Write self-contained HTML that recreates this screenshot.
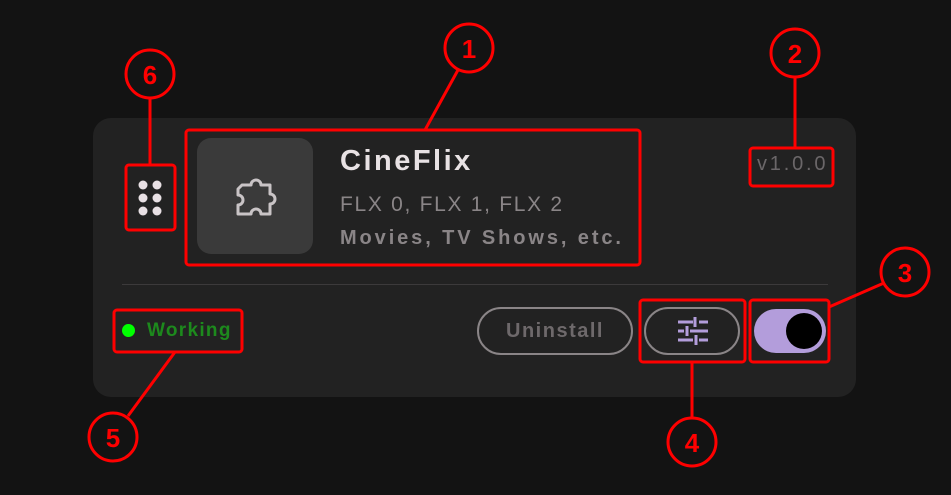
<!DOCTYPE html>
<html><head><style>
body{margin:0;width:951px;height:495px;background:#131313;position:relative;overflow:hidden;font-family:"Liberation Sans",sans-serif}
.a{position:absolute;white-space:nowrap}
.card{left:93px;top:118px;width:763px;height:279px;background:#222;border-radius:18px}
.t{color:#e8e2e4;font-weight:bold;font-size:29px;left:340px;top:145px;letter-spacing:2.5px}
.s{color:#8a8587;font-size:21px;left:340px;top:193px;letter-spacing:1.7px}
.b{color:#8a8587;font-weight:bold;font-size:20px;left:340px;top:227px;letter-spacing:2.9px}
.v{color:#6b6769;font-size:20px;left:757px;top:153px;letter-spacing:2.8px}
.btn{border:2px solid #8a8587;border-radius:26px;box-sizing:border-box}
</style></head><body>
<div class="a card"></div>
<div class="a" style="left:197px;top:138px;width:116px;height:116px;background:#3a3a3a;border-radius:14px"></div>
<svg class="a" style="left:230px;top:174px" width="52" height="46" viewBox="0 0 52 46"><path d="M12 11h9a5 5 0 0 1 10 0h9v9a5 5 0 0 1 0 10v10h-9a5 5 0 0 0-10 0H8v-9a5 5 0 0 0 0-10V15z" fill="none" stroke="#c9c4c6" stroke-width="3" stroke-linejoin="round"/></svg>
<div class="a t">CineFlix</div>
<div class="a s">FLX 0, FLX 1, FLX 2</div>
<div class="a b">Movies, TV Shows, etc.</div>
<div class="a v">v1.0.0</div>
<div class="a" style="left:122px;top:284px;width:706px;height:1px;background:#3c3a3b"></div>
<svg class="a" style="left:130px;top:170px" width="40" height="56"><g fill="#e8e0e4"><circle cx="13" cy="15" r="4.5"/><circle cx="27" cy="15" r="4.5"/><circle cx="13" cy="28" r="4.5"/><circle cx="27" cy="28" r="4.5"/><circle cx="13" cy="41" r="4.5"/><circle cx="27" cy="41" r="4.5"/></g></svg>
<div class="a" style="left:122px;top:324px;width:13px;height:13px;border-radius:50%;background:#0f0"></div>
<div class="a" style="left:147px;top:320px;color:#1d8a1d;font-weight:bold;font-size:19px;letter-spacing:1.3px">Working</div>
<div class="a btn" style="left:477px;top:307px;width:156px;height:48px;color:#6e696b;font-weight:bold;font-size:20px;text-align:center;line-height:44px;letter-spacing:1.5px">Uninstall</div>
<div class="a btn" style="left:644px;top:307px;width:96px;height:48px"></div>
<svg class="a" style="left:676px;top:316px" width="34" height="30" fill="none" stroke="#b39ddb" stroke-width="3">
<path d="M2 6h15M23 6h9M19 1v10M2 15h6M14 15h18M11 10v10M2 24h15M23 24h9M20 19v10"/></svg>
<div class="a" style="left:754px;top:309px;width:72px;height:44px;border-radius:22px;background:#b39ddb"></div>
<div class="a" style="left:786px;top:313px;width:36px;height:36px;border-radius:50%;background:#000"></div>
<svg class="a" style="left:0;top:0" width="951" height="495" fill="none" stroke="#f00" stroke-width="3">
<rect x="126" y="165" width="49" height="65" rx="3"/>
<rect x="186" y="130" width="454" height="135" rx="3"/>
<rect x="750" y="148" width="83" height="38" rx="3"/>
<rect x="750" y="300" width="79" height="62" rx="3"/>
<rect x="640" y="300" width="105" height="62" rx="3"/>
<rect x="114" y="310" width="128" height="42" rx="3"/>
<circle cx="469" cy="48" r="24"/><circle cx="795" cy="53" r="24"/><circle cx="905" cy="272" r="24"/><circle cx="692" cy="442" r="24"/><circle cx="113" cy="437" r="24"/><circle cx="150" cy="74" r="24"/>
<path d="M458 70L425 130M795 77V148M884 283L829 307M692 362V418M175 352L128 416M150 98V165"/>
<g fill="#f00" stroke="none" font-family="Liberation Sans" font-weight="bold" font-size="26" text-anchor="middle">
<text x="469" y="58">1</text><text x="795" y="63">2</text><text x="905" y="282">3</text><text x="692" y="452">4</text><text x="113" y="447">5</text><text x="150" y="84">6</text></g>
</svg>
</body></html>
